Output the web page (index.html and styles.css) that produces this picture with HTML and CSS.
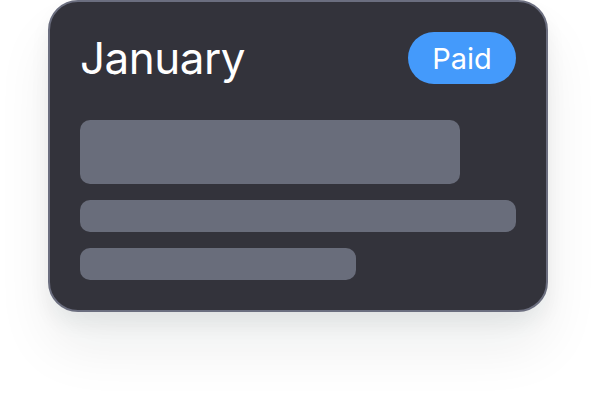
FILE: index.html
```html
<!DOCTYPE html>
<html>
<head>
<meta charset="utf-8">
<link rel="stylesheet" href="styles.css">
</head>
<body>
<div class="stage">
  <div class="card">
    <div class="header">
      <div class="title">January</div>
      <div class="badge">Paid</div>
    </div>
    <div class="lines">
      <div class="block"></div>
      <div class="bar"></div>
      <div class="bar short"></div>
    </div>
  </div>
</div>
</body>
</html>
```
FILE: styles.css
```css
html, body {
  margin: 0;
  padding: 0;
  background: #ffffff;
}
.stage {
  width: 596px;
  height: 408px;
  padding-left: 48px;
  box-sizing: border-box;
}
.card {
  width: 500px;
  height: 312px;
  box-sizing: border-box;
  background: #33333b;
  border: 2px solid #6b6e7f;
  border-radius: 30px;
  padding: 30px;
  box-shadow: 0 36px 56px rgba(20, 30, 30, 0.07), 0 12px 20px rgba(20, 30, 30, 0.06);
  font-family: Inter, "Open Sans", sans-serif;
}
.header {
  display: flex;
  justify-content: space-between;
  align-items: center;
  height: 52px;
}
.title {
  color: #ffffff;
  font-size: 44px;
  letter-spacing: -0.5px;
  line-height: 52px;
}
.badge {
  width: 108px;
  height: 52px;
  border-radius: 26px;
  background: #449afb;
  color: #ffffff;
  font-size: 29px;
  display: flex;
  align-items: center;
  justify-content: center;
}
.lines {
  margin-top: 36px;
  display: flex;
  flex-direction: column;
  gap: 16px;
}
.block {
  width: 380px;
  height: 64px;
  border-radius: 10px;
  background: #696d7b;
}
.bar {
  width: 436px;
  height: 32px;
  border-radius: 10px;
  background: #696d7b;
}
.bar.short {
  width: 276px;
}
```
